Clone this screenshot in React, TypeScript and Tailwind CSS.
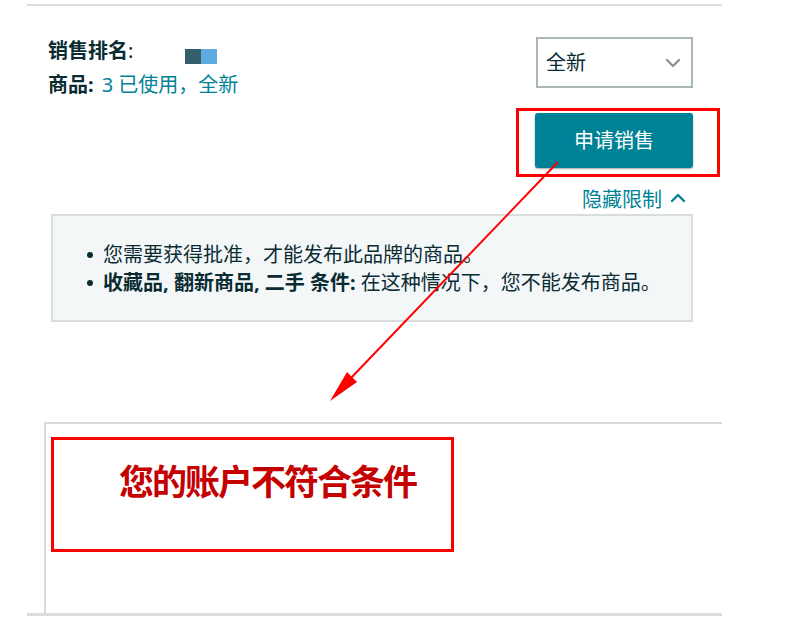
import React from "react";

const font = "font-['Noto_Sans','Noto_Sans_CJK_SC',sans-serif]";

const Chevron: React.FC<{ up?: boolean; className?: string }> = ({ up, className }) => (
  <svg viewBox="0 0 16 10" className={className} fill="none">
    <polyline
      points={up ? "2,8 8,2 14,8" : "2,2 8,8 14,2"}
      stroke="currentColor"
      strokeWidth="2.4"
      strokeLinecap="round"
      strokeLinejoin="round"
    />
  </svg>
);

const Bullet: React.FC<{ children: React.ReactNode }> = ({ children }) => (
  <li className="flex items-center h-[28px]">
    <span className="w-[6px] h-[6px] rounded-full bg-[#0b2b33] mr-[10px]" />
    <span>{children}</span>
  </li>
);

export default function App() {
  return (
    <div className={`relative w-[792px] h-[633px] bg-white overflow-hidden text-[#0b2b33] ${font}`}>
      <div className="pt-[4px]">
        <div className="ml-[27px] w-[695px] h-[2px] bg-[#dcdcdc]" />
      </div>

      {/* rank + condition row */}
      <div className="ml-[48px] w-[645px] mt-[28px] flex justify-between">
        <div className="text-[20px] leading-[34px]">
          <div className="flex items-start">
            <span>
              <b className="font-bold">销售排名</b>:
            </span>
            <span className="flex mt-[15px] ml-[52px]">
              <span className="w-[16px] h-[15px] bg-[#365f6d]" />
              <span className="w-[16px] h-[15px] bg-[#5dabe0]" />
            </span>
          </div>
          <div>
            <b className="font-bold">商品:</b>
            <span className="ml-[8px] text-[#008296]">3 已使用，全新</span>
          </div>
        </div>
        <div className="mt-[3px] w-[157px] h-[51px] border-2 border-[#aab7b8] flex items-center justify-between pl-[8px] pr-[10px] text-[20px]">
          <span>全新</span>
          <Chevron className="w-[16px] h-[10px] text-[#879596]" />
        </div>
      </div>

      {/* apply button */}
      <div className="ml-[516px] mt-[6px] w-[204px] h-[69px] border-[3px] border-[#ff0000] pl-[16px] pt-[2px]">
        <button
          type="button"
          className="w-[158px] h-[55px] rounded-[3px] bg-[#008296] text-white text-[20px] shadow-[0_1px_2px_rgba(0,0,0,0.35)]"
        >
          申请销售
        </button>
      </div>

      <div className="w-[686px] mt-[9px] h-[28px] flex justify-end items-center text-[20px] text-[#008296]">
        <span>隐藏限制</span>
        <Chevron up className="ml-[8px] w-[16px] h-[10px] -mt-[4px]" />
      </div>

      {/* restrictions */}
      <div className="ml-[51px] w-[642px] h-[108px] border-2 border-[#d9dcdc] bg-[#f3f7f8] pl-[34px] pt-[25px] text-[20px]">
        <ul>
          <Bullet>您需要获得批准，才能发布此品牌的商品。</Bullet>
          <Bullet>
            <b className="font-bold">收藏品, 翻新商品, 二手 条件:</b> 在这种情况下，您不能发布商品。
          </Bullet>
        </ul>
      </div>

      {/* result panel */}
      <div className="ml-[44px] mt-[100px] w-[678px] h-[191px] border-t-2 border-l-2 border-[#d9d9d9]">
        <div className="ml-[5px] mt-[13px] w-[403px] h-[115px] border-[3px] border-[#ff0000] pl-[65px] pt-[22px]">
          <span className="font-bold text-[35px] leading-[40px] tracking-[-2px] text-[#c40000]">
            您的账户不符合条件
          </span>
        </div>
      </div>
      <div className="ml-[27px] w-[695px] h-[3px] bg-[#dcdcdc]" />

      {/* annotation arrow */}
      <svg className="absolute left-0 top-0 pointer-events-none" width="792" height="633">
        <line x1="558" y1="162" x2="350" y2="379" stroke="#ff0000" strokeWidth="2" />
        <polygon points="330,401 347,372 357,382" fill="#ff0000" />
      </svg>
    </div>
  );
}
